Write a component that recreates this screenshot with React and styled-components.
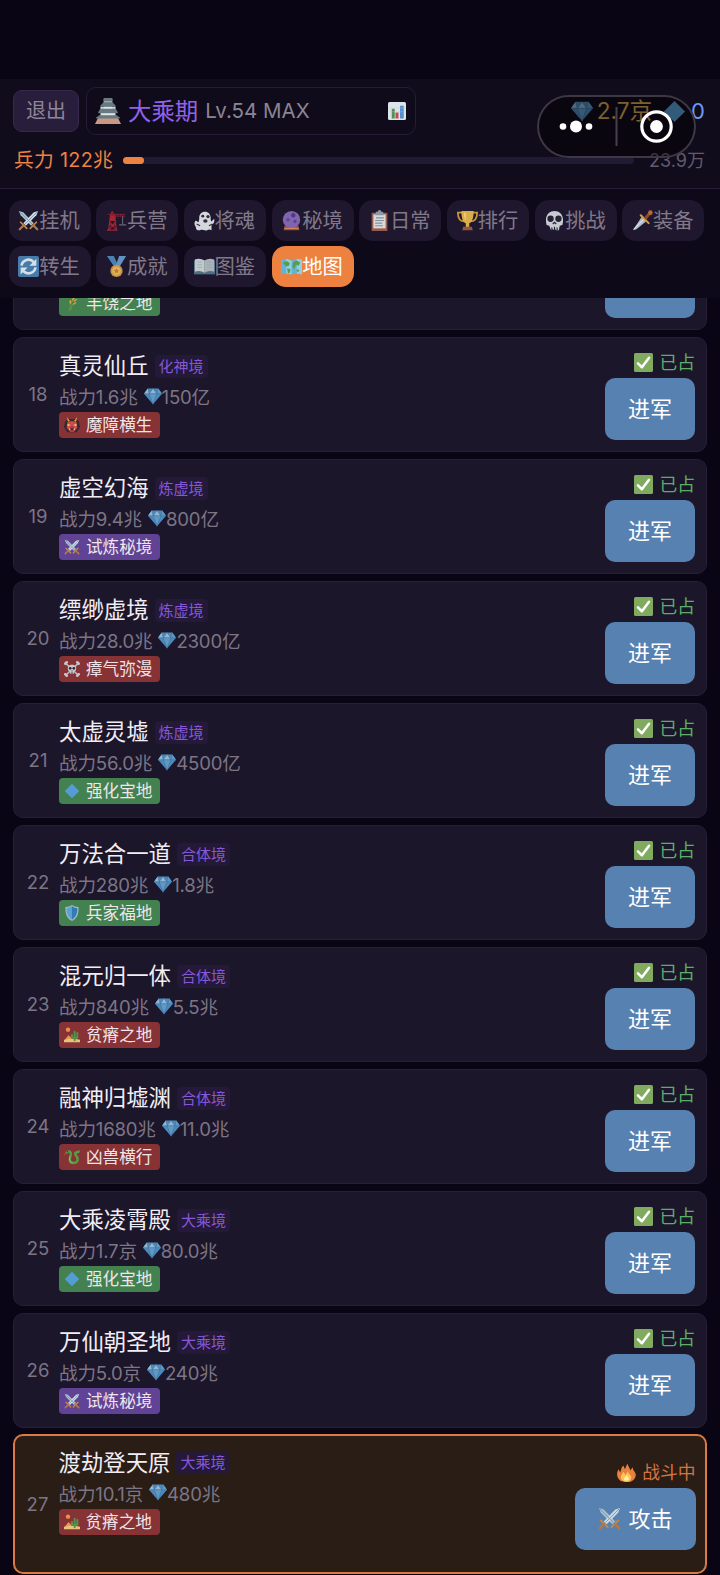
import styled, { createGlobalStyle, css } from 'styled-components';

const GlobalStyle = createGlobalStyle`
  * {
    box-sizing: border-box;
  }

  body {
    margin: 0;
    background: #090514;
    font-family: Inter, 'Noto Sans CJK SC', sans-serif;
    color: #f1edf5;
  }
`;

/* every drawing lives on a 24x24 grid */
const drawings = {
  swords: (
    <>
      <path d="M1 1l5 1.5L18 15l-3 3L3 6z" fill="#a9bfcd" />
      <path d="M23 1l-5 1.5L6 15l3 3L21 6z" fill="#cbd9e1" />
      <path d="M2 2l14 14M22 2L8 16" stroke="#718c9d" strokeWidth=".8" />
      <path d="M3 14l7 7M21 14l-7 7" stroke="#c58a45" strokeWidth="2" strokeLinecap="round" />
      <path d="M6 18l-4 4M18 18l4 4" stroke="#b67843" strokeWidth="2.6" strokeLinecap="round" />
    </>
  ),
  crane: (
    <g fill="none" stroke="#a32635" strokeWidth="1.2">
      <path d="M3 23L5 7h5l2 16M1 23h12M4 17h7M5 12h5M4 22l7-9M11 22l-7-9M5 7l2-5 3 5" />
      <path d="M2 5h20M10 7h12M13 5v2M17 5v2" strokeWidth=".8" />
      <path d="M19 7v9M15 17h8" stroke="#65687a" />
      <path d="M5 7h5v5H5z" fill="#a32635" />
    </g>
  ),
  ghost: (
    <>
      <path d="M6 8c1-8 12-8 13 0 0 3 0 4 1 5l3-3c1 4-1 6-3 7v6c-2-1-3-1-5 0-3 1-5-1-8 0-3 1-5-1-5-4-2-2-2-5 0-7l3 2c1-2 1-4 1-6z" fill="#d5d7de" />
      <circle cx="10" cy="7" r="1.7" fill="#302c3b" />
      <circle cx="16" cy="7.5" r="1.9" fill="#302c3b" />
      <ellipse cx="13" cy="12.5" rx="2.5" ry="2" fill="#302c3b" />
      <path d="M3 16l4 2M17 18l4-2" stroke="#302c3b" strokeWidth="1.2" />
    </>
  ),
  crystal: (
    <>
      <path d="M4 18h16l1 5H3z" fill="#9a5147" />
      <circle cx="12" cy="11" r="10" fill="#8064ad" />
      <circle cx="14" cy="6" r="2.5" fill="#513d7e" />
      <circle cx="8" cy="11" r="2" fill="#604791" />
      <circle cx="16" cy="13" r="1.8" fill="#59438a" />
      <path d="M4 21h16" stroke="#d58d54" strokeWidth="1.2" />
    </>
  ),
  clipboard: (
    <>
      <rect x="3" y="3" width="18" height="21" rx="1" fill="#995b4c" />
      <path d="M5 5h14v16H5z" fill="#d7d9dc" />
      <path d="M8 2h2a2 2 0 0 1 4 0h2l1 4H7z" fill="#8d99a3" />
      <path d="M8 9h9M7 12h10M7 15h8M7 18h9" stroke="#83909c" strokeWidth="1.2" />
    </>
  ),
  trophy: (
    <>
      <path d="M6 3H1c0 7 3 10 8 10M18 3h5c0 7-3 10-8 10" fill="none" stroke="#c5963d" strokeWidth="2" />
      <path d="M5 1h14c0 9-2 13-5 14v5h-4v-5C7 14 5 10 5 1z" fill="#d9ae4a" />
      <path d="M8 3h2v9C8 9 8 6 8 3z" fill="#f1cd72" />
      <path d="M7 19h10l1 4H6z" fill="#97543f" />
    </>
  ),
  skull: (
    <>
      <path d="M3 17C-3-4 27-4 21 17l-3 1-1 5h-3l-1-1-1 1-2-1-2 1-2-5z" fill="#c8cbd3" />
      <circle cx="7.5" cy="10" r="3.6" fill="#272231" />
      <circle cx="16.5" cy="10" r="3.6" fill="#272231" />
      <path d="M10 16l2-2 2 2M9 20v3M12 19v4M15 20v3" stroke="#272231" strokeWidth="1.3" fill="none" />
    </>
  ),
  dagger: (
    <>
      <path d="M1 23L11 8l5 5L5 22z" fill="#a9bdca" />
      <path d="M2 22L14 10" stroke="#e0e8ed" strokeWidth="1.2" />
      <path d="M10 6l9 9" stroke="#d39b42" strokeWidth="2.4" strokeLinecap="round" />
      <path d="M15 10l5-6" stroke="#91472f" strokeWidth="3.6" />
      <circle cx="21" cy="3" r="2.6" fill="#bd653d" />
    </>
  ),
  refresh: (
    <>
      <rect width="24" height="24" rx="2" fill="#477ba9" />
      <path d="M4 11a8 8 0 0 1 14-4M20 13a8 8 0 0 1-14 4" fill="none" stroke="#d5dfe6" strokeWidth="3" />
      <path d="M21 3v8h-8zM3 21v-8h8z" fill="#d5dfe6" />
    </>
  ),
  medal: (
    <>
      <path d="M1 0h8l5 11-4 2z" fill="#4b7fb2" />
      <path d="M15 0h8l-8 13-4-2z" fill="#6093c2" />
      <circle cx="12" cy="17" r="7" fill="#c89243" />
      <circle cx="12" cy="17" r="5" fill="#deb057" />
      <path d="M12 14l1 2h2l-1.5 1.6.6 2.4-2.1-1.3L9.900 20l.6-2.400L9 16h2z" fill="#b67a36" />
    </>
  ),
  book: (
    <>
      <path d="M0 5h24v16H0z" fill="#4f6e80" />
      <path d="M1 4q6-2 11 1v14q-5-3-11-1z" fill="#c1c9cd" />
      <path d="M23 4q-6-2-11 1v14q5-3 11-1z" fill="#a9b2b8" />
      <path d="M4 7h5M4 10h5M4 13h5M15 7h5M15 10h5M15 13h5" stroke="#98a4ab" strokeWidth=".8" />
    </>
  ),
  map: (
    <>
      <path d="M0 4l6-1 6 2 6-2 6 1v17l-6-1-6 1-6-1-6 1z" fill="#62b3d6" />
      <path d="M6 3l6 2v16l-6-1zM18 3l6 1v17l-6-1z" fill="#8dd0e2" />
      <path d="M2 7l5-1 3 2-1 3-3 1-2-2zM7 14l4 1-1 4-2 1zM14 7l3-2 5 2-2 4-3-1-2 5-2-3zM18 15l3 1-1 2h-2z" fill="#5f9a48" />
    </>
  ),
  chart: (
    <>
      <rect width="24" height="24" rx="2" fill="#dce4ea" />
      <path d="M5 9h4v13H5z" fill="#4d934e" />
      <path d="M10 14h4v8h-4z" fill="#c84951" />
      <path d="M16 5h5v17h-5z" fill="#568fce" />
      <path d="M1 8h22M1 13h22" stroke="#bec9d2" strokeWidth=".5" />
    </>
  ),
  castle: (
    <>
      <path d="M3 18h18l3 6H0z" fill="#c99883" />
      <path d="M5 8h14v10H5z" fill="#cbd3d6" />
      <path d="M8 1h8v9H8z" fill="#a8b7bd" />
      <path d="M8 0h8v3H8zM5 7l3-3h8l3 3v1H5zM3 13l2-3h14l2 3v1H3zM1 18l3-2h16l3 2v1H1z" fill="#687980" />
      <path d="M8 9h8M6 15h12" stroke="#dfe5e7" strokeWidth="1.2" />
    </>
  ),
  gem: (
    <>
      <path d="M5 2h14l5 7-12 14L0 9z" fill="#4c89bd" />
      <path d="M5 2l2 7H0zM12 2l5 7H7z" fill="#92b7d0" />
      <path d="M19 2l5 7h-7zM7 9h10l-5 14z" fill="#6299c2" />
      <path d="M0 9h24M5 2l2 7 5 14 5-14 2-7M7 9l5-7 5 7" fill="none" stroke="#396e9e" strokeWidth=".7" />
    </>
  ),
  diamond: <path d="M12 1l11 11-11 11L1 12z" fill="#559bd4" />,
  check: (
    <>
      <rect width="24" height="24" rx="2" fill="#80aa5d" />
      <path d="M5 13l5 5L19 6" fill="none" stroke="#fff" strokeWidth="3.2" strokeLinecap="round" strokeLinejoin="round" />
    </>
  ),
  fire: (
    <>
      <path d="M5 23C-2 18 0 11 2 8l2 4c2-5 1-6 4-9l2 5 3-7 4 8 3-4c-1 5 6 7 3 13-2 6-10 8-16 5z" fill="#e9813e" />
      <path d="M7 22c-5-4 0-8 1-11l3 4 3-5c0 5 5 5 4 9-1 5-7 6-11 3z" fill="#ffc458" />
      <path d="M10 22c-3-3 1-4 2-7 2 3 5 5 2 7z" fill="#fff0a0" />
    </>
  ),
  ogre: (
    <>
      <path d="M2 6l4-3h12l4 3 2 9-5 8H5L0 15z" fill="#342832" />
      <path d="M5 8l7-2 7 2 1 8-5 6H9l-5-6z" fill="#cf4c46" />
      <path d="M6 7L4 0l5 6zM18 7l2-7-5 6z" fill="#d8aa54" />
      <path d="M5 10l5 2-4 2zM19 10l-5 2 4 2z" fill="#f0cf75" />
      <path d="M8 17h8v3H8z" fill="#501e28" />
      <path d="M8 20v-4l2 3M16 20v-4l-2 3" fill="#eee" />
      <path d="M10 15h4" stroke="#842d36" strokeWidth="1.6" />
    </>
  ),
  bones: (
    <>
      <path d="M3 4l18 17M21 4L3 21" stroke="#b9bac2" strokeWidth="2.4" />
      <g fill="#c9cad0">
        <circle cx="2" cy="4" r="2" /><circle cx="4" cy="2" r="2" />
        <circle cx="20" cy="2" r="2" /><circle cx="22" cy="4" r="2" />
        <circle cx="2" cy="20" r="2" /><circle cx="4" cy="22" r="2" />
        <circle cx="20" cy="22" r="2" /><circle cx="22" cy="20" r="2" />
        <path d="M6 14C3 3 21 3 18 14l-3 2v3H9v-3z" />
      </g>
      <circle cx="9.3" cy="11" r="2" fill="#292735" />
      <circle cx="14.7" cy="11" r="2" fill="#292735" />
      <path d="M11 15h2M11 17v2M13 17v2" stroke="#292735" />
    </>
  ),
  shield: (
    <>
      <path d="M12 0c3 2 6 3 10 3 0 11-2 17-10 21C4 20 2 14 2 3c4 0 7-1 10-3z" fill="#9db7c7" />
      <path d="M12 2v20C6 18 4 13 4 5c3 0 5-1 8-3z" fill="#5aa2d4" />
      <path d="M12 2c3 2 5 3 8 3 0 8-2 13-8 17z" fill="#327cb1" />
    </>
  ),
  desert: (
    <>
      <circle cx="6" cy="4" r="3.3" fill="#ed8d52" />
      <path d="M1 19l6-7 6 7z" fill="#ed964f" />
      <path d="M0 19q12-3 24 0v4H0z" fill="#e7c27c" />
      <path d="M16 20V7M12 12v4h4M20 9v7h-4" fill="none" stroke="#54934b" strokeWidth="3" strokeLinecap="round" strokeLinejoin="round" />
    </>
  ),
  snake: (
    <>
      <path d="M4 5c5-3 7 0 6 4-2 7-2 12 4 12s7-4 6-8c-1-3-4-3-3-7l5-2" fill="none" stroke="#569b46" strokeWidth="3.8" strokeLinecap="round" strokeLinejoin="round" />
      <path d="M9 11c-2 6 0 9 4 9" fill="none" stroke="#9bc05c" strokeWidth="1.4" />
      <circle cx="5" cy="4" r="1" fill="#272b24" />
      <path d="M3 7l-3 2" stroke="#cf4c42" strokeWidth="1.3" />
    </>
  ),
  wheat: (
    <>
      <path d="M8 24Q9 11 17 2M10 23q0-8 8-13" fill="none" stroke="#719943" strokeWidth="1.3" />
      <path d="M12 9q0-5 4-7 1 4-4 7zM14 10q4 0 6-4-5 0-6 4zM9 14q-2-5 1-7 2 4-1 7zM13 15q4 0 6-4-5 0-6 4z" fill="#dba548" />
    </>
  ),
};

const Glyph = styled.svg`
  width: ${({ $size }) => $size}px;
  height: ${({ $size }) => $size}px;
  flex: none;
`;

function Icon({ name, size }) {
  return (
    <Glyph $size={size} viewBox="0 0 24 24" aria-hidden="true">
      {drawings[name]}
    </Glyph>
  );
}

const tabs = [
  ['swords', '挂机'],
  ['crane', '兵营'],
  ['ghost', '将魂'],
  ['crystal', '秘境'],
  ['clipboard', '日常'],
  ['trophy', '排行'],
  ['skull', '挑战'],
  ['dagger', '装备'],
  ['refresh', '转生'],
  ['medal', '成就'],
  ['book', '图鉴'],
  ['map', '地图'],
];

const traits = {
  rich: { icon: 'wheat', label: '丰饶之地', color: '#438150' },
  demon: { icon: 'ogre', label: '魔障横生', color: '#873234' },
  trial: { icon: 'swords', label: '试炼秘境', color: '#604394' },
  miasma: { icon: 'bones', label: '瘴气弥漫', color: '#873234' },
  forge: { icon: 'diamond', label: '强化宝地', color: '#438150' },
  army: { icon: 'shield', label: '兵家福地', color: '#438150' },
  barren: { icon: 'desert', label: '贫瘠之地', color: '#873234' },
  beast: { icon: 'snake', label: '凶兽横行', color: '#873234' },
};

const places = [
  { id: 18, name: '真灵仙丘', realm: '化神境', power: '1.6兆', reward: '150亿', trait: 'demon' },
  { id: 19, name: '虚空幻海', realm: '炼虚境', power: '9.4兆', reward: '800亿', trait: 'trial' },
  { id: 20, name: '缥缈虚境', realm: '炼虚境', power: '28.0兆', reward: '2300亿', trait: 'miasma' },
  { id: 21, name: '太虚灵墟', realm: '炼虚境', power: '56.0兆', reward: '4500亿', trait: 'forge' },
  { id: 22, name: '万法合一道', realm: '合体境', power: '280兆', reward: '1.8兆', trait: 'army' },
  { id: 23, name: '混元归一体', realm: '合体境', power: '840兆', reward: '5.5兆', trait: 'barren' },
  { id: 24, name: '融神归墟渊', realm: '合体境', power: '1680兆', reward: '11.0兆', trait: 'beast' },
  { id: 25, name: '大乘凌霄殿', realm: '大乘境', power: '1.7京', reward: '80.0兆', trait: 'forge' },
  { id: 26, name: '万仙朝圣地', realm: '大乘境', power: '5.0京', reward: '240兆', trait: 'trial' },
  { id: 27, name: '渡劫登天原', realm: '大乘境', power: '10.1京', reward: '480兆', trait: 'barren', fighting: true },
];

function TraitTag({ kind }) {
  const { icon, label, color } = traits[kind];

  return (
    <Trait $color={color}>
      <Icon name={icon} size={16} />
      {label}
    </Trait>
  );
}

/* the card scrolled under the tabs, only its lower edge is in view */
function ScrolledCard({ trait }) {
  return (
    <Card>
      <Index />
      <Info>
        <NameLine />
        <Stats />
        <TraitTag kind={trait} />
      </Info>
      <Side>
        <Status />
        <ActionButton />
      </Side>
    </Card>
  );
}

function PlaceCard({ place }) {
  const { id, name, realm, power, reward, trait, fighting } = place;

  return (
    <Card $active={fighting}>
      <Index>{id}</Index>
      <Info $active={fighting}>
        <NameLine>
          <Name>{name}</Name>
          <Realm>{realm}</Realm>
        </NameLine>
        <Stats>
          <span>战力{power}</span>
          <Reward>
            <Icon name="gem" size={18} />
            {reward}
          </Reward>
        </Stats>
        <TraitTag kind={trait} />
      </Info>
      <Side>
        <Status $active={fighting}>
          <Icon name={fighting ? 'fire' : 'check'} size={19} />
          <Label>{fighting ? '战斗中' : '已占'}</Label>
        </Status>
        <ActionButton>
          {fighting && <Icon name="swords" size={23} />}
          <Label>{fighting ? '攻击' : '进军'}</Label>
        </ActionButton>
      </Side>
    </Card>
  );
}

export default function App() {
  return (
    <Screen>
      <GlobalStyle />
      <Header>
        <TopRow>
          <ExitButton>
            <Label>退出</Label>
          </ExitButton>
          <RankBox>
            <Icon name="castle" size={26} />
            <Rank>大乘期</Rank>
            <Level>Lv.54 MAX</Level>
            <Icon name="chart" size={18} />
          </RankBox>
          <Wallet>
            <Icon name="gem" size={22} />
            <Gold>2.7京</Gold>
            <Icon name="diamond" size={23} />
            <Blue>0</Blue>
          </Wallet>
        </TopRow>
        <TroopRow>
          <Troops>兵力 122兆</Troops>
          <Track>
            <Fill />
          </Track>
          <Limit>23.9万</Limit>
        </TroopRow>
        <Capsule>
          <svg width="159" height="63" viewBox="0 0 159 63">
            <g fill="#fff">
              <circle cx="26" cy="31.5" r="3.3" />
              <circle cx="39" cy="31.5" r="6" />
              <circle cx="52" cy="31.5" r="3.3" />
              <circle cx="119.5" cy="31.5" r="6.4" />
            </g>
            <path d="M79.500 12v39" stroke="#45404c" strokeWidth="2" />
            <circle cx="119.5" cy="31.5" r="14.7" fill="none" stroke="#fff" strokeWidth="3.2" />
          </svg>
        </Capsule>
      </Header>
      <Tabs>
        {tabs.map(([icon, label]) => (
          <Tab key={label} $active={label === '地图'}>
            <Icon name={icon} size={21} />
            <Label>{label}</Label>
          </Tab>
        ))}
      </Tabs>
      <Viewport>
        <List>
          <ScrolledCard trait="rich" />
          {places.map((place) => (
            <PlaceCard key={place.id} place={place} />
          ))}
        </List>
      </Viewport>
    </Screen>
  );
}

const Screen = styled.main`
  width: 720px;
  height: 1575px;
  padding-top: 79px;
  display: flex;
  flex-direction: column;
  overflow: hidden;
  background: #090514;
`;

/* lifts CJK glyphs to the optical middle of their row */
const Label = styled.span`
  padding-bottom: 3px;
`;

const Header = styled.header`
  position: relative;
  flex: none;
  height: 110px;
  padding: 8px 15px 0 13px;
  background: #110c1c;
  border-bottom: 1px solid #241c38;
`;

const TopRow = styled.div`
  display: flex;
  align-items: center;
  height: 48px;
`;

const ExitButton = styled.button`
  display: flex;
  align-items: center;
  justify-content: center;
  width: 66px;
  height: 42px;
  padding: 0;
  margin-right: 7px;
  border: 1px solid #38284e;
  border-radius: 9px;
  background: #281d3a;
  color: #8e8699;
  font: inherit;
  font-size: 20px;
`;

const RankBox = styled.div`
  display: flex;
  align-items: center;
  width: 330px;
  height: 48px;
  padding: 0 9px 0 8px;
  border: 1px solid #241c38;
  border-radius: 10px;
  background: #100b1a;
`;

const Rank = styled.span`
  margin-left: 7px;
  padding-bottom: 3px;
  font-size: 23.4px;
  color: #9361e8;
`;

const Level = styled.span`
  flex: 1;
  margin-left: 7px;
  padding-bottom: 1px;
  font-size: 20.5px;
  color: #8b8495;
`;

const Wallet = styled.div`
  flex: 1;
  display: flex;
  align-items: center;
  justify-content: flex-end;
  font-size: 22px;
`;

const Gold = styled.span`
  margin: 0 11px 0 4px;
  padding-bottom: 4px;
  font-size: 22.6px;
  color: #d3a650;
`;

const Blue = styled.span`
  margin-left: 5px;
  padding-bottom: 1px;
  color: #6c9af5;
`;

const TroopRow = styled.div`
  display: flex;
  align-items: center;
  height: 50px;
  padding-left: 1px;
`;

const Troops = styled.span`
  width: 109px;
  flex: none;
  padding-bottom: 3px;
  font-size: 19.8px;
  letter-spacing: 0.3px;
  white-space: nowrap;
  color: #ed8343;
`;

const Track = styled.div`
  width: 511px;
  height: 7px;
  border-radius: 4px;
  background: #211a33;
`;

const Fill = styled.div`
  width: 21px;
  height: 100%;
  border-radius: 4px;
  background: #ed8343;
`;

const Limit = styled.span`
  flex: 1;
  padding-bottom: 3px;
  text-align: right;
  font-size: 18px;
  color: #625b6c;
`;

/* floats over the wallet, like the host app's own menu */
const Capsule = styled.div`
  position: absolute;
  top: 16px;
  right: 24px;
  width: 159px;
  height: 63px;
  border-radius: 32px;
  background: rgba(0, 0, 0, 0.42);
  box-shadow: inset 0 0 0 2px #3d3844;

  svg {
    display: block;
  }
`;

const Tabs = styled.nav`
  flex: none;
  height: 108.5px;
  padding: 11px 8.5px 0;
  display: grid;
  grid-template-columns: repeat(8, 82px);
  grid-auto-rows: 41px;
  column-gap: 5.7px;
  row-gap: 5px;
  background: #0d0918;
`;

const Tab = styled.button`
  display: flex;
  align-items: center;
  justify-content: center;
  padding: 0 1px 0 0;
  border: none;
  border-radius: 14px;
  background: #1f172d;
  color: #81798a;
  font: inherit;
  font-size: 20.3px;
  white-space: nowrap;

  ${({ $active }) => $active && css`
    background: #ed813f;
    color: #fff;
  `}
`;

const Viewport = styled.section`
  flex: 1;
  min-height: 0;
  overflow: hidden;
  display: flex;
  flex-direction: column;
  justify-content: flex-end;
  padding: 0 13px 1px;
`;

const List = styled.div`
  display: flex;
  flex-direction: column;
  gap: 7.5px;
`;

const Card = styled.article`
  flex: none;
  display: flex;
  align-items: center;
  height: 114.5px;
  padding: 0 11px 0 10px;
  border: 1px solid #261f37;
  border-radius: 10px;
  background: #1c162a;

  ${({ $active }) => $active && css`
    height: 140px;
    margin-top: -1px;
    padding: 0 9.5px 0 8.5px;
    border: 2.5px solid #dc7a42;
    background: #2a1d15;
  `}
`;

const Index = styled.span`
  width: 28px;
  margin-right: 7px;
  text-align: center;
  font-size: 18.5px;
  color: #7c7586;
`;

const Info = styled.div`
  flex: 1;
  align-self: flex-start;
  padding-top: ${({ $active }) => ($active ? 11.5 : 13)}px;
`;

const NameLine = styled.div`
  display: flex;
  align-items: center;
  height: 30px;
`;

const Name = styled.h3`
  margin: 0;
  font-size: 22.4px;
  font-weight: 400;
  line-height: 30px;
`;

const Realm = styled.span`
  margin-left: 6px;
  padding: 0 4px;
  border-radius: 4px;
  background: #241938;
  color: #8658d5;
  font-size: 15px;
  line-height: 23px;
`;

const Stats = styled.div`
  display: flex;
  align-items: center;
  gap: 6px;
  height: 31px;
  padding-bottom: 2px;
  font-size: 18.6px;
  letter-spacing: -0.2px;
  color: #7c7586;
`;

const Reward = styled.span`
  display: flex;
  align-items: center;
`;

const Trait = styled.span`
  display: inline-flex;
  align-items: center;
  gap: 6px;
  height: 26px;
  width: 101px;
  padding-left: 5px;
  border-radius: 4px;
  background: ${({ $color }) => $color};
  color: #f0e5ea;
  font-size: 16.6px;
  line-height: 26px;
  white-space: nowrap;
  vertical-align: top;
`;

const Side = styled.div`
  display: flex;
  flex-direction: column;
  align-items: flex-end;
  margin-top: -2px;
`;

const Status = styled.div`
  display: flex;
  align-items: center;
  gap: 6px;
  height: 31px;
  font-size: 17.8px;
  color: ${({ $active }) => ($active ? '#d67341' : '#5cae68')};
`;

const ActionButton = styled.button`
  display: flex;
  align-items: center;
  justify-content: center;
  gap: 7px;
  min-width: 90px;
  height: 62px;
  padding: 0 23px;
  border: none;
  border-radius: 10px;
  background: #5781b1;
  color: #fff;
  font: inherit;
  font-size: 22px;
`;
